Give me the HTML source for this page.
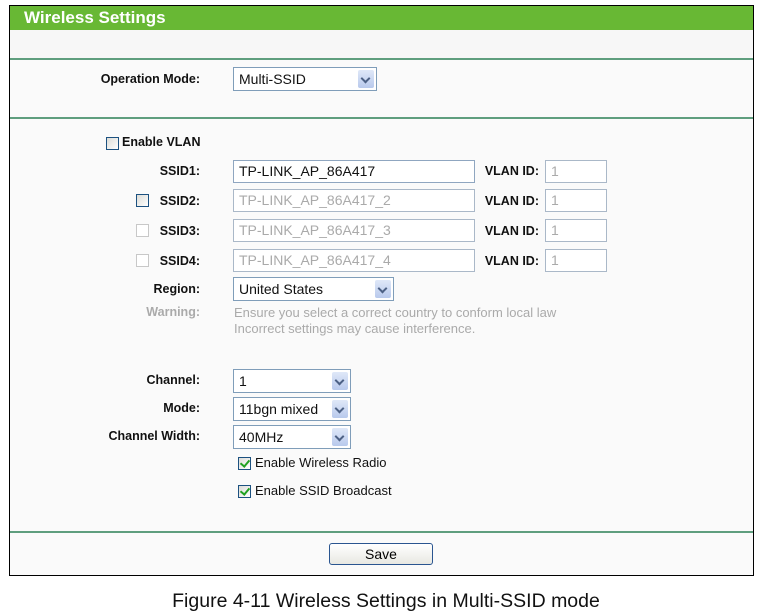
<!DOCTYPE html>
<html><head><meta charset="utf-8"><style>
*{margin:0;padding:0;box-sizing:border-box}
body{width:759px;height:612px;background:#fff;position:relative;font-family:"Liberation Sans",Arial,sans-serif;overflow:hidden}
.a{position:absolute}
#frame{left:9px;top:5px;width:745px;height:571px;border:1px solid #000;background:#fafafa}
.hdr{left:10px;top:6px;width:743px;height:24px;background:#68b834;color:#fff;font-weight:bold;font-size:17px;padding:2px 0 0 14px}
.strip{left:10px;top:30px;width:743px;height:29px;background:#f7f7f7}
.gl{left:10px;width:743px;height:2px;background:#5f9e7e}
.lb{font-weight:bold;font-size:12.5px;color:#111;text-align:right;width:200px}
.in{border:1px solid #8fa6c0;background:#fff;font-size:14px;color:#111;padding:2px 0 0 5px;height:23px}
.dis{color:#aaa;border-color:#aab8c8}
.sel{border:1px solid #7f9db9;background:#fff;font-size:14px;color:#111;padding:3px 0 0 5px;height:24px}
.arr{position:absolute;right:2px;top:2px;width:16px;height:18px;background:linear-gradient(#dfe8f8,#b8c9ec);border-radius:2px}
.arr:after{content:"";position:absolute;left:4px;top:5px;width:5px;height:5px;border-right:2px solid #4d6185;border-bottom:2px solid #4d6185;transform:rotate(45deg)}
.cb{width:13px;height:13px;border:1px solid #1c5180;background:linear-gradient(135deg,#dcdcd7,#fff)}
.cbd{border-color:#c8c8c8;background:#fff}
.ck:after{content:"";position:absolute;left:3px;top:0px;width:4px;height:7px;border-right:2px solid #21a121;border-bottom:2px solid #21a121;transform:rotate(40deg)}
.t{font-size:13px;color:#111}
.g{color:#aaa}
</style></head><body>
<div id="frame" class="a"></div>
<div class="a hdr">Wireless Settings</div>
<div class="a strip"></div>
<div class="a gl" style="top:58px"></div>
<div class="a lb" style="left:0;top:72px">Operation Mode:</div>
<div class="a sel" style="left:233px;top:67px;width:144px">Multi-SSID<div class="arr"></div></div>
<div class="a gl" style="top:117px"></div>

<div class="a cb" style="left:106px;top:137px"></div>
<div class="a lb" style="left:122px;top:135px;text-align:left">Enable VLAN</div>

<div class="a lb" style="left:0;top:164px">SSID1:</div>
<div class="a in" style="left:233px;top:160px;width:242px">TP-LINK_AP_86A417</div>
<div class="a lb" style="left:339px;top:164px">VLAN ID:</div>
<div class="a in dis" style="left:545px;top:160px;width:62px">1</div>

<div class="a cb" style="left:136px;top:194px"></div>
<div class="a lb" style="left:0;top:194px">SSID2:</div>
<div class="a in dis" style="left:233px;top:189px;width:242px">TP-LINK_AP_86A417_2</div>
<div class="a lb" style="left:339px;top:194px">VLAN ID:</div>
<div class="a in dis" style="left:545px;top:189px;width:62px">1</div>

<div class="a cb cbd" style="left:136px;top:224px"></div>
<div class="a lb" style="left:0;top:224px">SSID3:</div>
<div class="a in dis" style="left:233px;top:219px;width:242px">TP-LINK_AP_86A417_3</div>
<div class="a lb" style="left:339px;top:224px">VLAN ID:</div>
<div class="a in dis" style="left:545px;top:219px;width:62px">1</div>

<div class="a cb cbd" style="left:136px;top:254px"></div>
<div class="a lb" style="left:0;top:254px">SSID4:</div>
<div class="a in dis" style="left:233px;top:249px;width:242px">TP-LINK_AP_86A417_4</div>
<div class="a lb" style="left:339px;top:254px">VLAN ID:</div>
<div class="a in dis" style="left:545px;top:249px;width:62px">1</div>

<div class="a lb" style="left:0;top:282px">Region:</div>
<div class="a sel" style="left:233px;top:277px;width:161px">United States<div class="arr"></div></div>
<div class="a lb g" style="left:0;top:305px;color:#aaa">Warning:</div>
<div class="a t g" style="left:234px;top:305px;color:#aaa">Ensure you select a correct country to conform local law</div>
<div class="a t g" style="left:234px;top:321px;color:#aaa">Incorrect settings may cause interference.</div>

<div class="a lb" style="left:0;top:373px">Channel:</div>
<div class="a sel" style="left:233px;top:369px;width:118px">1<div class="arr"></div></div>
<div class="a lb" style="left:0;top:401px">Mode:</div>
<div class="a sel" style="left:233px;top:397px;width:118px">11bgn mixed<div class="arr"></div></div>
<div class="a lb" style="left:0;top:429px">Channel Width:</div>
<div class="a sel" style="left:233px;top:425px;width:118px">40MHz<div class="arr"></div></div>

<div class="a cb ck" style="left:238px;top:457px"></div>
<div class="a t" style="left:255px;top:455px">Enable Wireless Radio</div>
<div class="a cb ck" style="left:238px;top:485px"></div>
<div class="a t" style="left:255px;top:483px">Enable SSID Broadcast</div>

<div class="a gl" style="top:531px"></div>
<div class="a" style="left:329px;top:543px;width:104px;height:22px;border:1px solid #2a5590;border-radius:3px;background:linear-gradient(#fff,#e8e8e2);font-size:14px;text-align:center;padding-top:2px">Save</div>

<div class="a" style="left:0;top:590px;width:772px;text-align:center;font-size:19.5px;color:#111">Figure 4-11 Wireless Settings in Multi-SSID mode</div>
</body></html>
